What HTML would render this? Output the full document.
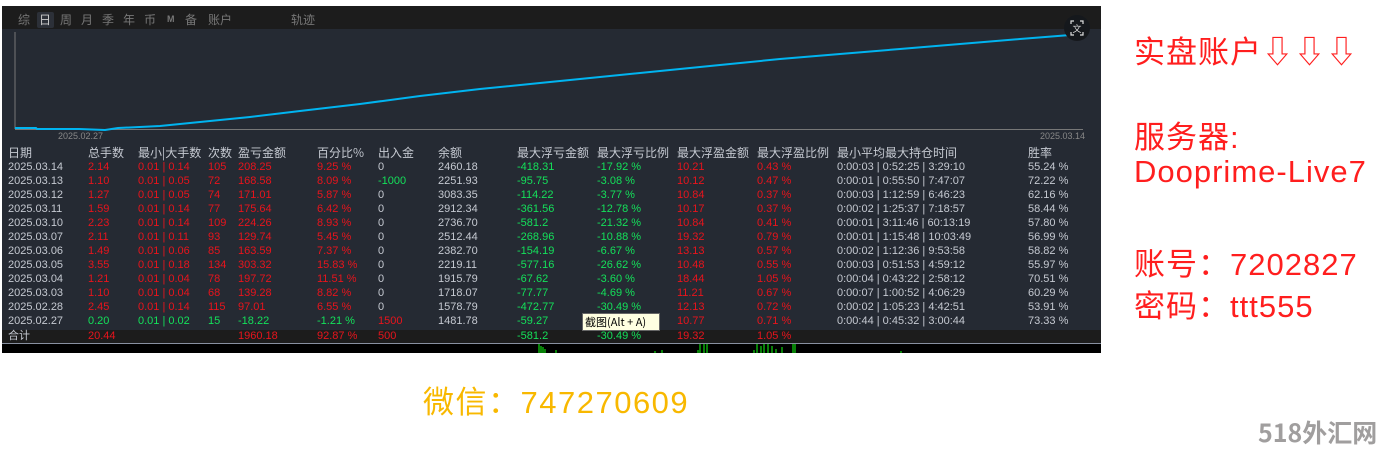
<!DOCTYPE html><html><head><meta charset="utf-8"><style>
body{margin:0;width:1393px;height:454px;background:#fff;position:relative;overflow:hidden;font-family:"Liberation Sans","Noto Sans CJK SC",sans-serif}
.a{position:absolute;white-space:nowrap}
#p{position:absolute;left:2px;top:6px;width:1099px;height:347px;background:#252a33}
.t{font-size:11px;line-height:13px;color:#c5c9d1}
.r{color:#e8141c}.g{color:#14e05a}
.big{font-size:31px;letter-spacing:1px;color:#ff1e1e;font-family:"Liberation Sans","Noto Sans CJK SC",sans-serif}
.tab{position:absolute;top:11px;font-size:12px;color:#777;font-family:'Noto Sans CJK SC',sans-serif}
</style></head><body>
<div id="p"></div>
<div class="a" style="left:2px;top:6px;width:1099px;height:23px;background:#1c1c1c"></div>
<div class="a" style="left:37px;top:12px;width:17px;height:16px;background:#2c3038;border-radius:2px"></div>
<div class="tab" style="left:18px">综</div><div class="tab" style="left:39px;color:#ccc">日</div><div class="tab" style="left:60px">周</div><div class="tab" style="left:81px">月</div><div class="tab" style="left:102px">季</div><div class="tab" style="left:123px">年</div><div class="tab" style="left:144px">币</div><div class="tab" style="left:167px;font-size:9px;font-weight:bold;top:14px;font-family:'Liberation Sans'">M</div><div class="tab" style="left:185px">备</div><div class="tab" style="left:208px">账户</div>
<div class="tab" style="left:291px">轨迹</div>
<svg class="a" style="left:0;top:0" width="1102" height="150">
<line x1="15" y1="32" x2="15" y2="129" stroke="#777" stroke-width="1"/>
<line x1="15" y1="129.5" x2="1083" y2="129.5" stroke="#777" stroke-width="1"/>
<polyline fill="none" stroke="#00b4f0" stroke-width="2" points="15,128 36,128 37,129 79,129 105,130 118,128 160,126 200,122 250,117 300,111 360,104 420,96 480,89 540,83 600,77 660,71 720,65 780,59 840,54 900,49 960,44 1020,39 1083,34"/>
<circle cx="1077" cy="28" r="13" fill="#15181c"/>
<path d="M1071 24v-3h3M1080 21h3v3M1083 32v3h-3M1074 35h-3v-3" stroke="#ddd" fill="none" stroke-width="1.2"/>
<text x="1077" y="32" font-size="9" fill="#ddd" text-anchor="middle" font-family="Noto Sans CJK SC">文</text>
</svg>
<div class="a t" style="left:58px;top:130px;font-size:9px;color:#888">2025.02.27</div>
<div class="a t" style="left:1040px;top:130px;font-size:9px;color:#888">2025.03.14</div>
<div class="a" style="left:2px;top:330px;width:1099px;height:13px;background:#1c1c1c"></div>
<div class="a" style="left:2px;top:343px;width:1099px;height:1px;background:#8890a0"></div>
<div class="a" style="left:2px;top:344px;width:1099px;height:9px;background:#000"></div>
<svg class="a" style="left:0;top:344px" width="1102" height="9">
<g stroke="#1f1" stroke-width="1"><line x1="539" y1="0" x2="539" y2="9"/><line x1="541" y1="2" x2="541" y2="9"/><line x1="543" y1="3" x2="543" y2="9"/><line x1="545" y1="5" x2="545" y2="9"/><line x1="556" y1="6" x2="556" y2="9"/><line x1="655" y1="7" x2="655" y2="9"/><line x1="662" y1="6" x2="662" y2="9"/><line x1="698" y1="6" x2="698" y2="9"/><line x1="700" y1="0" x2="700" y2="9"/><line x1="704" y1="0" x2="704" y2="9"/><line x1="707" y1="0" x2="707" y2="9"/><line x1="754" y1="6" x2="754" y2="9"/><line x1="757" y1="0" x2="757" y2="9"/><line x1="761" y1="2" x2="761" y2="9"/><line x1="764" y1="0" x2="764" y2="9"/><line x1="768" y1="0" x2="768" y2="9"/><line x1="772" y1="2" x2="772" y2="9"/><line x1="776" y1="5" x2="776" y2="9"/><line x1="782" y1="3" x2="782" y2="9"/><line x1="793" y1="0" x2="793" y2="9"/><line x1="795" y1="0" x2="795" y2="9"/><line x1="901" y1="7" x2="901" y2="9"/></g></svg>
<div class="a t" style="left:0;top:0;width:1100px;height:454px" id="tb"></div>
<div class="a t" style="left:582px;top:313px;width:74px;height:16px;background:#ffffe1;border:1px solid #666;color:#000;font-size:11px;line-height:16px;padding-left:2px;font-family:'Noto Sans CJK SC',sans-serif">截图(Alt + A)</div>
<div class="a big" style="left:1134px;top:27px">实盘账户⇩⇩⇩</div>
<div class="a big" style="left:1134px;top:112px">服务器:</div>
<div class="a big" style="left:1134px;top:154px">Dooprime-Live7</div>
<div class="a big" style="left:1134px;top:239px">账号：7202827</div>
<div class="a big" style="left:1134px;top:281px">密码：ttt555</div>
<div class="a" style="left:423px;top:377px;font-size:31px;letter-spacing:1.5px;color:#f8b800;font-family:'Liberation Sans','Noto Sans CJK SC',sans-serif">微信：747270609</div>
<div class="a" style="left:1258px;top:414px;font-size:25px;font-weight:bold;color:#a09e9e;font-family:'Noto Sans CJK SC',sans-serif">518外汇网</div>
<script>
var X=[8,88,138,208,238,317,378,438,517,597,677,757,837,1028];
var H=["日期","总手数","最小|大手数","次数","盈亏金额","百分比%","出入金","余额","最大浮亏金额","最大浮亏比例","最大浮盈金额","最大浮盈比例","最小平均最大持仓时间","胜率"];
var R=[
["2025.03.14","2.14","0.01 | 0.14","105","208.25","9.25 %","0","2460.18","-418.31","-17.92 %","10.21","0.43 %","0:00:03 | 0:52:25 | 3:29:10","55.24 %"],
["2025.03.13","1.10","0.01 | 0.05","72","168.58","8.09 %","-1000","2251.93","-95.75","-3.08 %","10.12","0.47 %","0:00:01 | 0:55:50 | 7:47:07","72.22 %"],
["2025.03.12","1.27","0.01 | 0.05","74","171.01","5.87 %","0","3083.35","-114.22","-3.77 %","10.84","0.37 %","0:00:03 | 1:12:59 | 6:46:23","62.16 %"],
["2025.03.11","1.59","0.01 | 0.14","77","175.64","6.42 %","0","2912.34","-361.56","-12.78 %","10.17","0.37 %","0:00:02 | 1:25:37 | 7:18:57","58.44 %"],
["2025.03.10","2.23","0.01 | 0.14","109","224.26","8.93 %","0","2736.70","-581.2","-21.32 %","10.84","0.41 %","0:00:01 | 3:11:46 | 60:13:19","57.80 %"],
["2025.03.07","2.11","0.01 | 0.11","93","129.74","5.45 %","0","2512.44","-268.96","-10.88 %","19.32","0.79 %","0:00:01 | 1:15:48 | 10:03:49","56.99 %"],
["2025.03.06","1.49","0.01 | 0.06","85","163.59","7.37 %","0","2382.70","-154.19","-6.67 %","13.13","0.57 %","0:00:02 | 1:12:36 | 9:53:58","58.82 %"],
["2025.03.05","3.55","0.01 | 0.18","134","303.32","15.83 %","0","2219.11","-577.16","-26.62 %","10.48","0.55 %","0:00:03 | 0:51:53 | 4:59:12","55.97 %"],
["2025.03.04","1.21","0.01 | 0.04","78","197.72","11.51 %","0","1915.79","-67.62","-3.60 %","18.44","1.05 %","0:00:04 | 0:43:22 | 2:58:12","70.51 %"],
["2025.03.03","1.10","0.01 | 0.04","68","139.28","8.82 %","0","1718.07","-77.77","-4.69 %","11.21","0.67 %","0:00:07 | 1:00:52 | 4:06:29","60.29 %"],
["2025.02.28","2.45","0.01 | 0.14","115","97.01","6.55 %","0","1578.79","-472.77","-30.49 %","12.13","0.72 %","0:00:02 | 1:05:23 | 4:42:51","53.91 %"],
["2025.02.27","0.20","0.01 | 0.02","15","-18.22","-1.21 %","1500","1481.78","-59.27","-30.49 %","10.77","0.71 %","0:00:44 | 0:45:32 | 3:00:44","73.33 %"]];
var h="";
H.forEach(function(s,i){h+='<div class="a" style="left:'+X[i]+'px;top:146px;font-size:12px;font-family:\'Noto Sans CJK SC\',sans-serif">'+s+'</div>';});
R.forEach(function(r,j){var y=161+j*14;r.forEach(function(s,i){var c="";
if(i>=1&&i<=5)c=(j==11)?"g":"r";if(i==6&&j==1)c="g";if(i==6&&j==11)c="r";if(i==8||i==9)c="g";if(i==10||i==11)c="r";
h+='<div class="a '+c+'" style="left:'+X[i]+'px;top:'+y+'px">'+s+'</div>';});});
var S=[["合计",8,""],["20.44",88,"r"],["1960.18",238,"r"],["92.87 %",317,"r"],["500",378,"r"],["-581.2",517,"g"],["-30.49 %",597,"g"],["19.32",677,"r"],["1.05 %",757,"r"]];
S.forEach(function(s){h+='<div class="a '+s[2]+'" style="left:'+s[1]+'px;top:330px">'+s[0]+'</div>';});
document.getElementById("tb").innerHTML=h;
</script>
</body></html>
